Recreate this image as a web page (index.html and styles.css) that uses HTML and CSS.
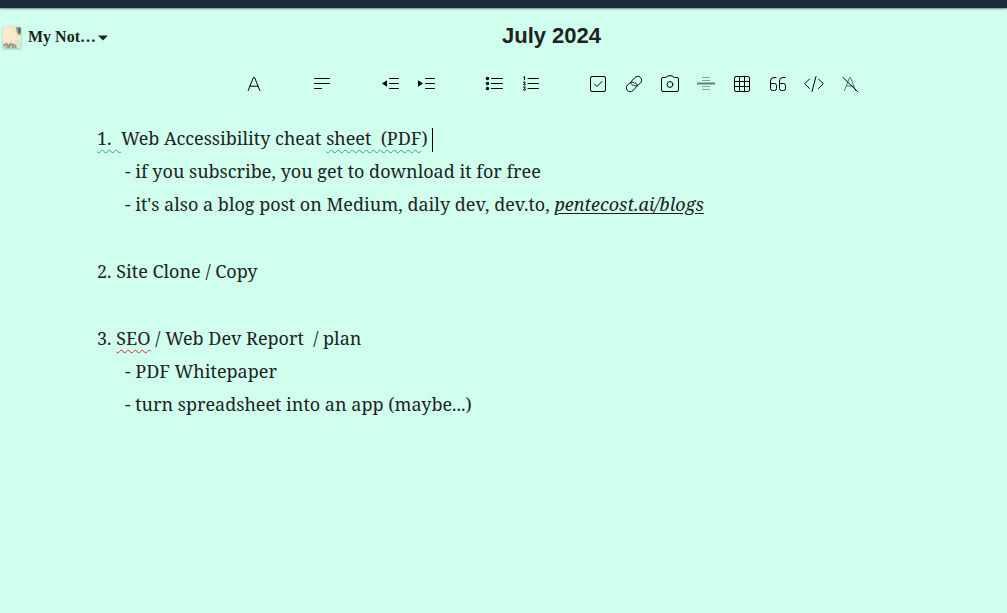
FILE: index.html
```html
<!DOCTYPE html>
<html lang="en">
<head>
<meta charset="utf-8">
<meta name="viewport" content="width=device-width, initial-scale=1">
<title>July 2024</title>
<link rel="stylesheet" href="styles.css">
</head>
<body>
<div class="topbar"></div>
<header class="header">
  <button class="notebook" type="button">
    <svg class="cover" viewBox="0 0 18 22" aria-hidden="true">
      <rect width="18" height="22" rx="2" fill="#f8e3c4"/>
      <path d="M0 3C6 1 11 3 13 8C14 13 10 16 0 16Z" fill="#fbeacd"/>
      <path d="M13 1H16Q18 1 18 3V9H15Q13 6 13 1Z" fill="#93a58b"/>
      <path d="M16.500 2V7" stroke="#3f6152" stroke-width="2"/>
      <path d="M11 15Q15 13 18 15V20Q18 22 16 22H12Q13 18 11 15Z" fill="#dfe6cf"/>
      <path d="M0 18Q3 16 5 18Q8 15 11 18L13 22H2Q0 22 0 20Z" fill="#c3c5ae"/>
      <path d="M1 20Q3 16 5 19V22M6 21Q7 17 9 18T10 22M11 18Q13 19 13 22" fill="none" stroke="#6b776d"/>
    </svg>
    <span class="notebook-name">My Not…</span>
    <svg class="caret" viewBox="0 0 10 6" aria-hidden="true"><path d="M0 .5H10L5 5.5Z" fill="#1f2221"/></svg>
  </button>
  <h1 class="title">July 2024</h1>
</header>
<div class="toolbar" role="toolbar" aria-label="Formatting">
  <div class="group">
    <button class="tool" type="button" aria-label="Font"><svg viewBox="0 0 20 20"><path d="M4.200 16.500L9.400 3.500H10.600L15.800 16.500M6 12.200H14"/></svg></button>
  </div>
  <div class="group">
    <button class="tool" type="button" aria-label="Align"><svg viewBox="0 0 20 20"><path d="M2.500 4.500H17.500M2.500 9.500H17.500M2.500 14.500H9.500"/></svg></button>
  </div>
  <div class="group">
    <button class="tool" type="button" aria-label="Outdent"><svg viewBox="0 0 20 20"><path d="M9.500 4.500H18.500M9.500 9.500H18.500M9.500 14.500H18.500"/><path class="solid" d="M7 6.200V12.800L2 9.500Z"/></svg></button>
    <button class="tool" type="button" aria-label="Indent"><svg viewBox="0 0 20 20"><path d="M9.500 4.500H18.500M9.500 9.500H18.500M9.500 14.500H18.500"/><path class="solid" d="M2 6.200V12.800L7 9.500Z"/></svg></button>
  </div>
  <div class="group">
    <button class="tool" type="button" aria-label="Bulleted list"><svg viewBox="0 0 20 20"><path d="M7.500 4.500H18.500M7.500 9.500H18.500M7.500 14.500H18.500"/><g class="solid"><circle cx="3.500" cy="4.500" r="1.700"/><circle cx="3.500" cy="9.500" r="1.700"/><circle cx="3.500" cy="14.500" r="1.700"/></g></svg></button>
    <button class="tool" type="button" aria-label="Numbered list"><svg viewBox="0 0 20 20"><path d="M8 4.500H18.500M8 9.500H18.500M8 14.500H18.500"/><path d="M3.600 3.200L4.600 2.500V5.800M3.300 8.200Q5.300 7.200 5.200 8.800L3.500 10.800H5.500M3.500 13H5.300L4.300 14.400Q5.700 14.500 5.300 16Q4.300 16.800 3.300 16"/></svg></button>
  </div>
  <div class="group">
    <button class="tool" type="button" aria-label="Checklist"><svg viewBox="0 0 20 20"><rect x="2.500" y="2.500" width="15" height="15" rx="1.500"/><path d="M6.500 10L9 12.500L14 7.500"/></svg></button>
    <button class="tool" type="button" aria-label="Link"><svg viewBox="0 0 20 20"><path d="M8.800 11.300C6.600 10.300 6.300 8.300 7.700 6.900L11 3.500C12.500 2 15 2 16.500 3.500S18 7.500 16.500 9L13.500 11.500C12.500 12.300 11 12.300 9.800 11"/><path d="M11.200 8.700C13.400 9.700 13.700 11.700 12.300 13.100L9 16.500C7.500 18 5 18 3.500 16.500S2 12.500 3.500 11L6.500 8.500C7.500 7.700 9 7.700 10.200 9"/></svg></button>
    <button class="tool" type="button" aria-label="Image"><svg viewBox="0 0 20 20"><path d="M3 3.500H5.500L8 2Q10 1.300 12 2L14.500 3.500H17Q18.500 3.500 18.500 5V16Q18.500 17.500 17 17.500H3Q1.500 17.500 1.500 16V5Q1.500 3.500 3 3.500Z"/><circle cx="10" cy="10.500" r="2.900"/></svg></button>
    <button class="tool" type="button" aria-label="Divider"><svg class="divider" viewBox="0 0 20 20"><path d="M6 3.500H14M6 6.500H14M6 12.500H14M6 15.500H14" opacity=".7"/><path d="M1 9.500H19" stroke-width="2"/></svg></button>
    <button class="tool" type="button" aria-label="Table"><svg viewBox="0 0 20 20"><rect x="2.500" y="2.500" width="15" height="15" rx="1.500"/><path d="M7.500 2.500V17.500M12.500 2.500V17.500M2.500 7.500H17.500M2.500 12.500H17.500"/></svg></button>
    <button class="tool" type="button" aria-label="Quote"><svg viewBox="0 0 20 20"><path d="M8 3.500H6Q2.500 3.500 2.500 7V14.500Q2.500 16.500 4.500 16.500H6.500Q8.500 16.500 8.500 14.500V11.500Q8.500 9.500 6.500 9.500H2.500M17 3.500H15Q11.500 3.500 11.500 7V14.500Q11.500 16.500 13.500 16.500H15.500Q17.500 16.500 17.500 14.500V11.500Q17.500 9.500 15.500 9.500H11.500"/></svg></button>
    <button class="tool" type="button" aria-label="Code"><svg viewBox="0 0 20 20"><path d="M5.500 5L.8 9.700L5.500 14.500M14.500 5L19.200 9.700L14.500 14.500M12 2.500L8 17.500"/></svg></button>
    <button class="tool" type="button" aria-label="Clear formatting"><svg viewBox="0 0 20 20"><path class="muted" d="M4.500 16.500L9.500 3.500H10.500L15.500 16.500M6.500 12H13.500"/><path d="M3 3.500L17.500 17.500"/></svg></button>
  </div>
</div>
<main class="note">
  <p><span class="grammar">1.&nbsp; </span>Web Accessibility cheat <span class="grammar">sheet&nbsp; (PDF</span>)<span class="cursor"></span></p>
  <p class="sub">- if you subscribe, you get to download it for free</p>
  <p class="sub">- it's also a blog post on Medium, daily dev, dev.to, <a class="link" href="#">pentecost.ai/blogs</a></p>
  <p class="blank"><br></p>
  <p>2. Site Clone / Copy</p>
  <p class="blank"><br></p>
  <p>3. <span class="spelling">SEO</span> / Web Dev Report&nbsp; / plan</p>
  <p class="sub">- PDF Whitepaper</p>
  <p class="sub">- turn spreadsheet into an app (maybe...)</p>
</main>
</body>
</html>
```
FILE: styles.css
```css
* {
  box-sizing: border-box;
}

body {
  margin: 0;
  min-height: 100vh;
  background: #d0ffee;
  color: #1f2221;
}

.topbar {
  height: 8px;
  background: #1e2b3a;
  box-shadow: 0 1px 2px rgba(0, 0, 0, 0.45);
}

.header {
  display: flex;
  align-items: center;
  height: 56px;
  padding-right: 12px;
}

.notebook {
  display: flex;
  align-items: center;
  width: 108px;
  padding: 2px 0 0 3px;
  border: 0;
  background: none;
  color: inherit;
  font: bold 16px/24px "Liberation Serif", serif;
}

.cover {
  flex: none;
  width: 18px;
  height: 22px;
  margin-right: 7px;
  filter: drop-shadow(0 1px 1px rgba(0, 0, 0, 0.25));
}

.notebook-name {
  white-space: nowrap;
}

.caret {
  flex: none;
  width: 10px;
  height: 6px;
  margin: 2px 0 0 2px;
}

.title {
  flex: 1;
  margin: 0;
  text-align: center;
  font: bold 22px/28px "Liberation Sans", sans-serif;
}

.toolbar {
  display: flex;
  justify-content: center;
  gap: 32px;
  padding-left: 97px;
}

.group {
  display: flex;
}

.tool {
  display: grid;
  place-items: center;
  width: 36px;
  height: 40px;
  padding: 0;
  border: 0;
  background: none;
}

.tool svg {
  width: 20px;
  height: 20px;
  fill: none;
  stroke: #000;
  stroke-width: 1;
  stroke-linecap: round;
  stroke-linejoin: round;
}

.tool .solid {
  fill: #000;
  stroke: none;
}

.tool .muted {
  stroke: #5d736b;
}

.tool .divider {
  stroke: #678077;
  stroke-linecap: butt;
}

.note {
  padding: 18px 24px 40px 97px;
  font: 18px/33px "Noto Serif", "DejaVu Serif Condensed", serif;
}

.note p {
  margin: 0;
}

.note .sub {
  padding-left: 28px;
}

.note .blank {
  line-height: 34px;
}

.grammar,
.spelling {
  text-decoration: underline wavy 1px #2fa583;
  text-underline-offset: 4px;
  text-decoration-skip-ink: none;
  white-space: pre-wrap;
}

.spelling {
  text-decoration-color: #e8202e;
}

.cursor {
  display: inline-block;
  width: 1px;
  height: 24px;
  margin-left: 4px;
  background: #000;
  vertical-align: middle;
}

.link {
  color: inherit;
  font-style: italic;
  text-underline-offset: 2px;
}
```
